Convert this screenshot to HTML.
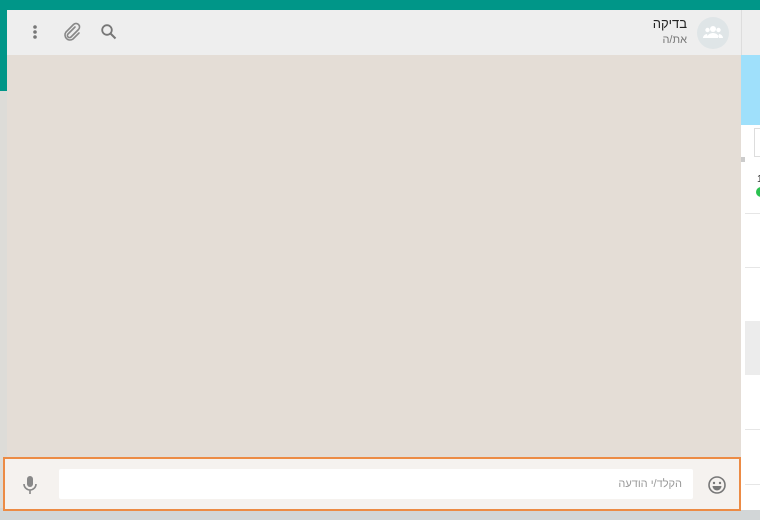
<!DOCTYPE html>
<html><head><meta charset="utf-8"><style>
body{margin:0;width:760px;height:520px;overflow:hidden;position:relative;background:#dadbd6;font-family:"Liberation Sans","Noto Sans CJK JP",sans-serif}
.a{position:absolute}
</style></head><body>
<div class="a" style="left:0;top:0;width:760px;height:91px;background:#009688"></div>
<div class="a" style="left:0;top:91px;width:7px;height:429px;background:#dddcd8"></div>
<div class="a" style="left:0;top:508px;width:760px;height:12px;background:#d2d6d7"></div>
<!-- right panel -->
<div class="a" style="left:741px;top:10px;width:19px;height:45px;background:#eeeeee;border-left:1px solid #ddd"></div>
<div class="a" style="left:741px;top:55px;width:19px;height:70px;background:#9fe0fb"></div>
<div class="a" style="left:741px;top:125px;width:19px;height:385px;background:#fff"></div>
<div class="a" style="left:754px;top:128px;width:6px;height:27px;border:1px solid #ddd;border-right:none;background:#fff"></div>
<div class="a" style="left:741px;top:157px;width:4px;height:5px;background:#ccc"></div>
<div class="a" style="left:757px;top:174px;font-size:10px;color:#333">1</div>
<div class="a" style="left:756px;top:187px;width:10px;height:10px;border-radius:50%;background:#2bc150"></div>
<div class="a" style="left:745px;top:213px;width:15px;height:1px;background:#e6e6e6"></div>
<div class="a" style="left:745px;top:267px;width:15px;height:1px;background:#e6e6e6"></div>
<div class="a" style="left:745px;top:321px;width:15px;height:54px;background:#ececec"></div>
<div class="a" style="left:745px;top:429px;width:15px;height:1px;background:#e6e6e6"></div>
<div class="a" style="left:745px;top:484px;width:15px;height:1px;background:#e6e6e6"></div>
<!-- main -->
<div class="a" style="left:7px;top:10px;width:734px;height:45px;background:#eeeeee"></div>
<div class="a" style="left:697px;top:17px;width:32px;height:32px;border-radius:50%;background:#dfe5e7"></div>
<svg class="a" style="left:703px;top:24px" width="20" height="16" viewBox="0 0 20 16"><circle cx="10" cy="5" r="3" fill="#fff"/><circle cx="4.5" cy="6" r="2.2" fill="#fff"/><circle cx="15.5" cy="6" r="2.2" fill="#fff"/><path d="M4 14c0-3 3-5 6-5s6 2 6 5z M0 14c0-2 2-4 4-4l1 4z M20 14c0-2-2-4-4-4l-1 4z" fill="#fff"/></svg>
<div class="a" style="right:73px;top:16px;font-size:13px;color:#222;direction:rtl">בדיקה</div>
<div class="a" style="right:73px;top:34px;font-size:11px;color:#777;direction:rtl">את/ה</div>
<svg class="a" style="left:28px;top:24px" width="14" height="18"><circle cx="7" cy="3" r="1.8" fill="#777"/><circle cx="7" cy="8" r="1.8" fill="#777"/><circle cx="7" cy="13" r="1.8" fill="#777"/></svg>
<svg class="a" style="left:62px;top:22px" width="20" height="20" viewBox="0 0 20 20"><path d="M13 5l-7 7a2 2 0 0 0 3 3l7.5-7.5a3.5 3.5 0 0 0-5-5L4 10a5 5 0 0 0 7 7l6-6" fill="none" stroke="#888" stroke-width="1.6" stroke-linecap="round"/></svg>
<svg class="a" style="left:100px;top:23px" width="18" height="18" viewBox="0 0 18 18"><circle cx="7" cy="7" r="4.8" fill="none" stroke="#777" stroke-width="1.8"/><path d="M10.5 10.5l5 5" stroke="#777" stroke-width="2"/></svg>
<div class="a" style="left:7px;top:55px;width:734px;height:402px;background:#e4ddd6"></div>
<!-- footer -->
<div class="a" style="left:3px;top:457px;width:734px;height:50px;background:#f5f2ef;border:2px solid #ec8b45"></div>
<div class="a" style="left:59px;top:469px;width:634px;height:30px;background:#fff;border-radius:2px"></div>
<div class="a" style="right:78px;top:478px;font-size:11px;color:#999;direction:rtl">הקלד/י הודעה</div>
<svg class="a" style="left:20px;top:474px" width="20" height="22" viewBox="0 0 20 22"><rect x="7" y="2" width="6" height="11" rx="3" fill="#888"/><path d="M4 10a6 6 0 0 0 12 0M10 16v4" fill="none" stroke="#888" stroke-width="1.6"/></svg>
<svg class="a" style="left:707px;top:475px" width="20" height="20" viewBox="0 0 20 20"><circle cx="10" cy="10" r="8" fill="none" stroke="#777" stroke-width="1.6"/><circle cx="7" cy="8" r="1.2" fill="#777"/><circle cx="13" cy="8" r="1.2" fill="#777"/><path d="M5.5 11h9a4.5 4.5 0 0 1-9 0z" fill="#777"/></svg>
</body></html>
